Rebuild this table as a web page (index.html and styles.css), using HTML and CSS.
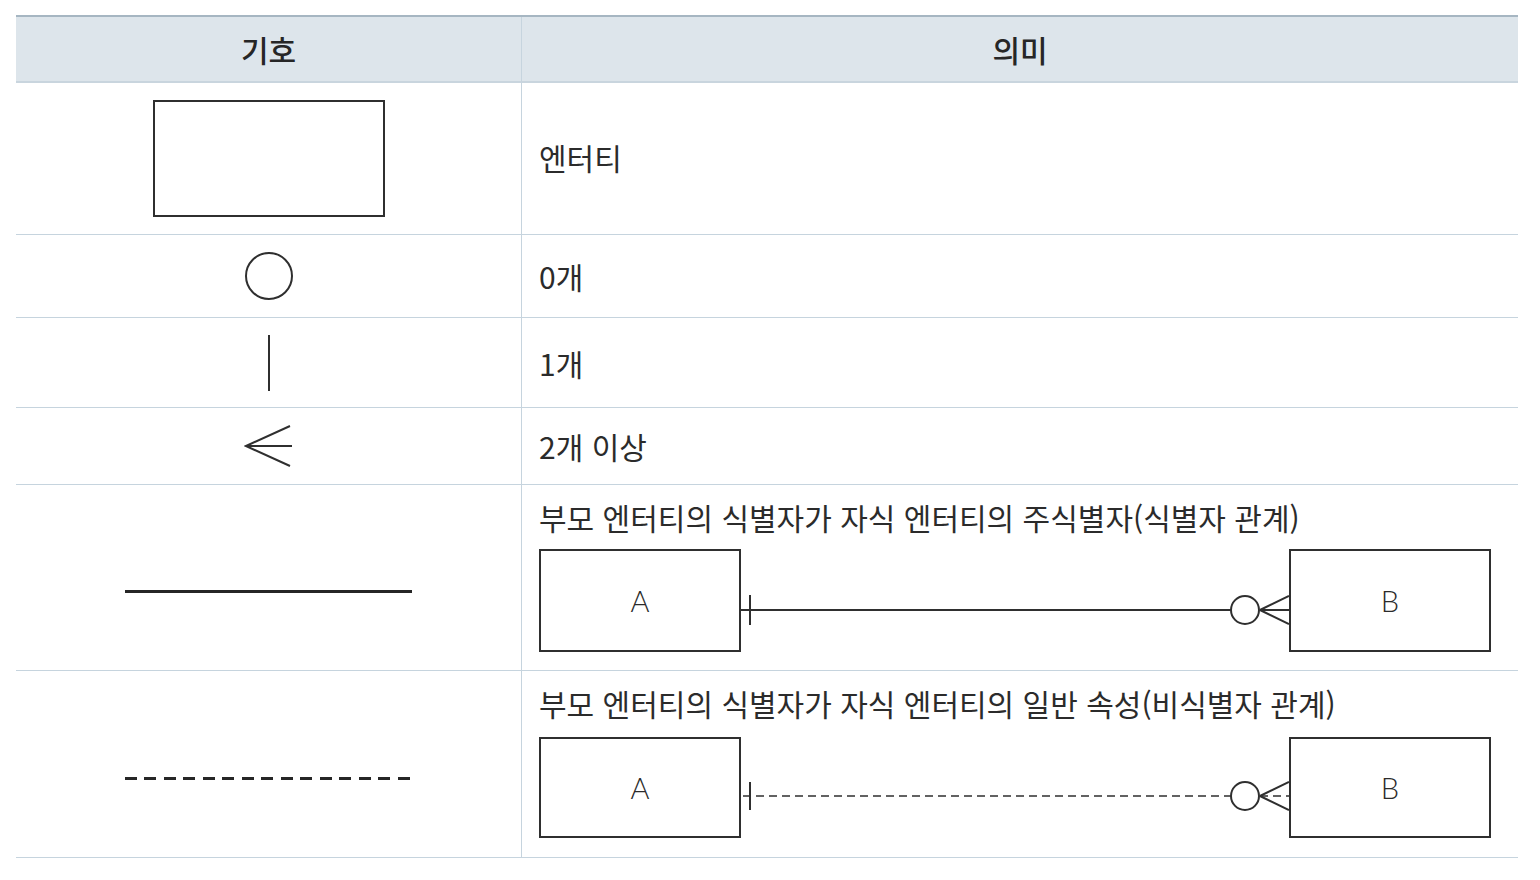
FILE: index.html
```html
<!DOCTYPE html>
<html lang="ko">
<head>
<meta charset="utf-8">
<link rel="stylesheet" href="styles.css">
</head>
<body>
<div class="table">
  <div class="cell head">기호</div>
  <div class="cell head divider">의미</div>

  <div class="cell sym r1"><div class="entity"></div></div>
  <div class="cell mean r1 divider">엔터티</div>

  <div class="cell sym r2">
    <svg width="50" height="50" viewBox="0 0 50 50"><circle cx="25" cy="25" r="23" fill="none" stroke="#2f2f2f" stroke-width="2"/></svg>
  </div>
  <div class="cell mean r2 divider">0개</div>

  <div class="cell sym r3">
    <svg width="6" height="58" viewBox="0 0 6 58"><line x1="3" y1="1" x2="3" y2="57" stroke="#2f2f2f" stroke-width="2"/></svg>
  </div>
  <div class="cell mean r3 divider">1개</div>

  <div class="cell sym r4">
    <svg width="50" height="44" viewBox="0 0 50 44"><path d="M46 2 L2 22 L46 42 M2 22 L48 22" fill="none" stroke="#2f2f2f" stroke-width="2" stroke-linejoin="miter"/></svg>
  </div>
  <div class="cell mean r4 divider">2개 이상</div>

  <div class="cell sym r5"><div class="solid"></div></div>
  <div class="cell mean r5 divider stack">
    <div class="desc">부모 엔터티의 식별자가 자식 엔터티의 주식별자(식별자 관계)</div>
    <div class="diagram">
      <div class="box">A</div>
      <svg class="conn" width="548" height="103" viewBox="0 0 548 103">
        <line x1="0" y1="61" x2="490" y2="61" stroke="#2f2f2f" stroke-width="2"/>
        <line x1="9" y1="46" x2="9" y2="76" stroke="#2f2f2f" stroke-width="2"/>
        <circle cx="504" cy="61" r="14" fill="#fff" stroke="#2f2f2f" stroke-width="2"/>
        <path d="M519 61 L548 47 M519 61 L548 61 M519 61 L548 75" fill="none" stroke="#2f2f2f" stroke-width="2"/>
      </svg>
      <div class="box">B</div>
    </div>
  </div>

  <div class="cell sym r6 last"><div class="dashed"></div></div>
  <div class="cell mean r6 divider last stack">
    <div class="desc">부모 엔터티의 식별자가 자식 엔터티의 일반 속성(비식별자 관계)</div>
    <div class="diagram">
      <div class="box">A</div>
      <svg class="conn" width="548" height="101" viewBox="0 0 548 101">
        <line x1="2" y1="59" x2="490" y2="59" stroke="#2f2f2f" stroke-width="1.6" stroke-dasharray="8 5"/>
        <line x1="9" y1="45" x2="9" y2="73" stroke="#2f2f2f" stroke-width="2"/>
        <circle cx="504" cy="59" r="14" fill="#fff" stroke="#2f2f2f" stroke-width="2"/>
        <line x1="519" y1="59" x2="548" y2="59" stroke="#2f2f2f" stroke-width="1.6" stroke-dasharray="8 5"/>
        <path d="M519 59 L548 45 M519 59 L548 73" fill="none" stroke="#2f2f2f" stroke-width="2"/>
      </svg>
      <div class="box">B</div>
    </div>
  </div>
</div>
</body>
</html>
```

FILE: styles.css
```css
html, body {
  margin: 0;
  padding: 0;
  background: #ffffff;
}

body {
  font-family: "Noto Sans CJK KR", "Noto Sans", sans-serif;
  color: #2b2b2b;
}

.table {
  margin: 15px 0 0 16px;
  width: 1502px;
  display: grid;
  grid-template-columns: 505px 1fr;
  grid-template-rows: 66px 152px 83px 90px 77px 186px 187px;
  border-top: 2px solid #a6b6c2;
}

.cell {
  border-bottom: 1px solid #c6d4de;
  display: flex;
  align-items: center;
}

.divider {
  border-left: 1px solid #c6d4de;
}

.head {
  background: #dde5eb;
  justify-content: center;
  font-size: 30px;
  font-weight: 500;
  color: #262626;
  border-bottom: 2px solid #c9d5de;
}

.sym {
  justify-content: center;
}

.mean {
  padding-left: 17px;
  font-size: 30px;
  letter-spacing: 0;
  font-weight: 400;
}

.r1.mean {
  padding-bottom: 3px;
}

.entity {
  width: 228px;
  height: 113px;
  border: 2px solid #2f2f2f;
}

.solid {
  width: 287px;
  height: 3px;
  margin-top: 27px;
  background: #262626;
}

.dashed {
  width: 287px;
  height: 3px;
  margin-top: 29px;
  background: repeating-linear-gradient(to right, #262626 0 12px, transparent 12px 19.5px);
}

.stack {
  flex-direction: column;
  align-items: flex-start;
  justify-content: flex-start;
  padding-top: 14px;
}

.desc {
  line-height: 36px;
  height: 36px;
}

.diagram {
  margin-top: 14px;
  display: flex;
  align-items: stretch;
}

.r6 .diagram {
  margin-top: 16px;
}

.box {
  width: 198px;
  height: 99px;
  border: 2px solid #2f2f2f;
  display: flex;
  align-items: center;
  justify-content: center;
  font-family: "Lato", "Noto Sans", sans-serif;
  font-weight: 300;
  font-size: 29px;
  letter-spacing: 0;
  color: #2b2b2b;
}

.r6 .box {
  height: 97px;
}

.conn {
  display: block;
  flex: none;
}
```
